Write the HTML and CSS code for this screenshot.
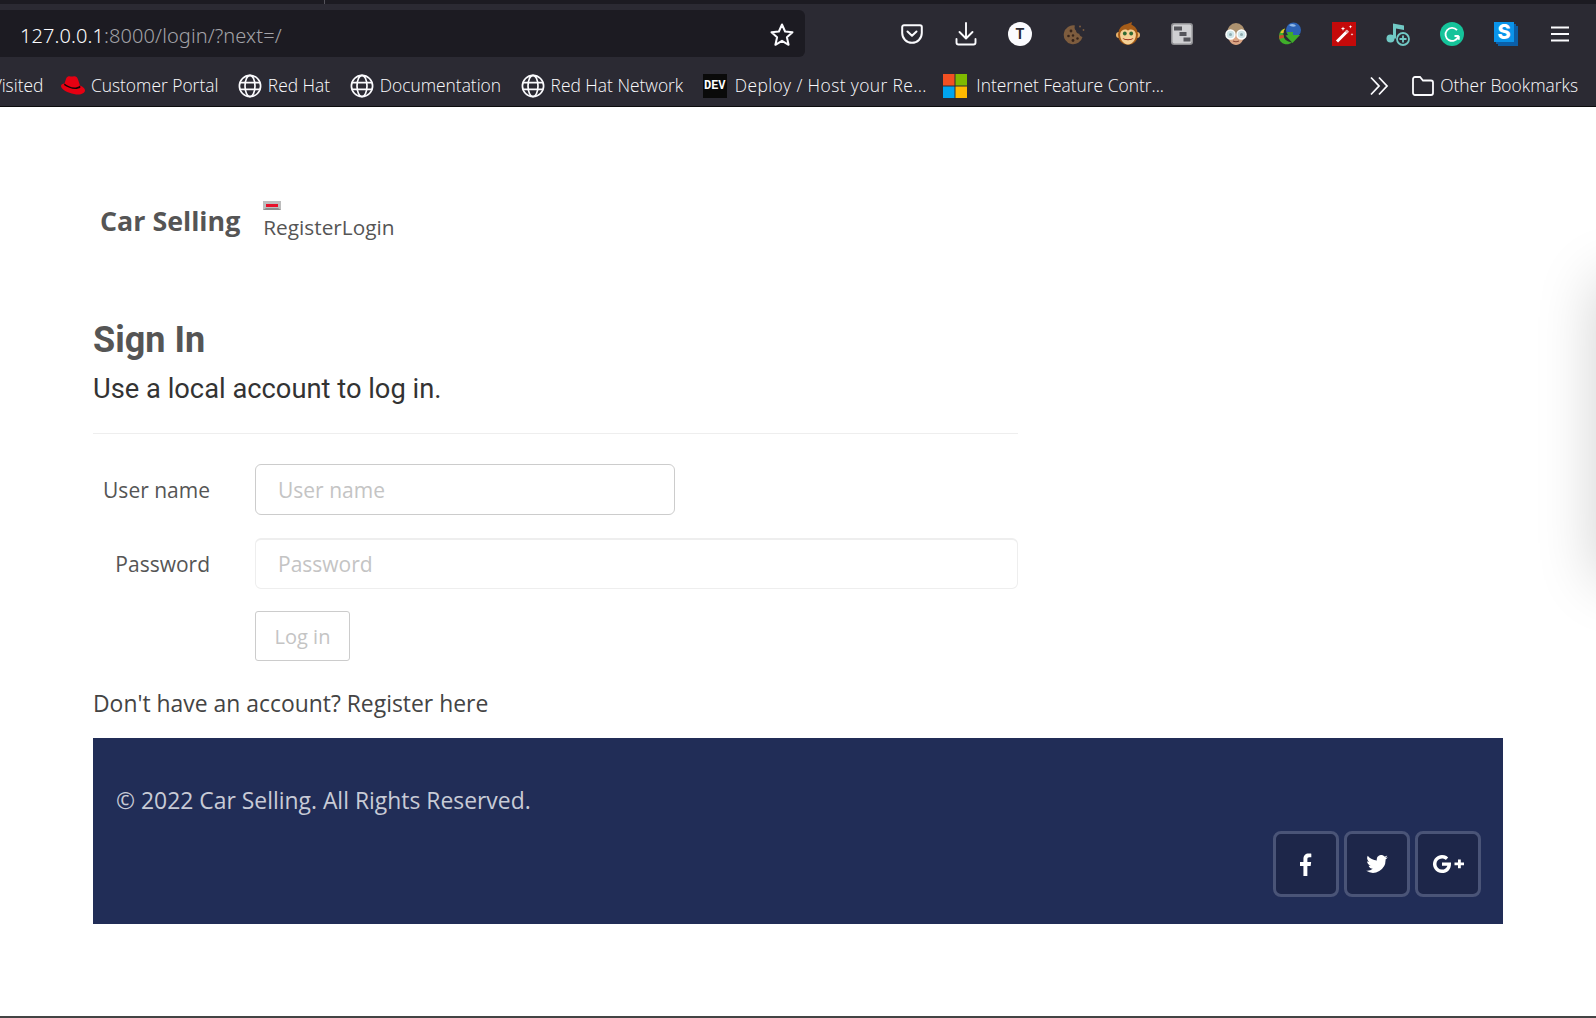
FILE: index.html
```html
<!DOCTYPE html>
<html>
	<head>
		<meta charset="utf-8">
		<title>Sign In</title>
		<link rel="stylesheet" href="styles.css">
	</head>
	<body>
		<svg class="defs" width="0" height="0">
			<symbol id="globe" viewBox="0 0 24 24">
				<g fill="none" stroke="#fbfbfe" stroke-width="1.7">
					<circle cx="12" cy="12" r="10.6"/>
					<ellipse cx="12" cy="12" rx="5" ry="10.6"/>
					<path d="M1.6 8.6h20.8M1.6 15.4h20.8"/>
				</g>
			</symbol>
		</svg>
		<div class="browser">
			<div class="tabstrip"><span class="tabsep"></span></div>
			<div class="toolbar">
				<div class="urlbar">
					<span class="url"><span class="host">127.0.0.1</span>:8000/login/?next=/</span>
					<svg class="star" width="26" height="26" viewBox="0 0 26 26"><path d="M13 2.500l3.100 7 7.400.7-5.600 5 1.700 7.600-6.600-4-6.600 4 1.700-7.600-5.600-5 7.400-.7z" fill="none" stroke="#fbfbfe" stroke-width="2" stroke-linejoin="round"/></svg>
				</div>
				<div class="addons">
					<span class="addon"><svg width="22" height="20" viewBox="0 0 22 20"><path d="M3 1.200h16a1.800 1.800 0 0 1 1.800 1.800v6a9.800 9.800 0 0 1-19.600 0V3A1.800 1.800 0 0 1 3 1.200z" fill="none" stroke="#fbfbfe" stroke-width="2"/><path d="M6.500 7.500l4.500 4.300 4.500-4.300" fill="none" stroke="#fbfbfe" stroke-width="2" stroke-linecap="round" stroke-linejoin="round"/></svg></span>
					<span class="addon"><svg width="22" height="24" viewBox="0 0 22 24"><path d="M11 1v15M4.500 10l6.500 6.500 6.500-6.500M1.500 17v3.500a2 2 0 0 0 2 2h15a2 2 0 0 0 2-2V17" fill="none" stroke="#fbfbfe" stroke-width="1.900" stroke-linecap="round" stroke-linejoin="round"/></svg></span>
					<span class="addon"><span class="badge-t">T</span></span>
					<span class="addon"><svg width="24" height="24" viewBox="0 0 24 24"><path d="M13 3.500a9.500 9.500 0 1 0 7.500 11.500c-2-.5-3-1.500-3.200-3.200-2-.2-3.300-1.500-3.300-3.300-1.500-1.200-1.800-3.200-1-5z" fill="#7d5c3e"/><circle cx="9" cy="9" r="1.400" fill="#36241a"/><circle cx="6.500" cy="14" r="1.300" fill="#36241a"/><circle cx="11" cy="13.500" r="1.200" fill="#36241a"/><circle cx="11" cy="18.500" r="1.400" fill="#36241a"/><circle cx="15.500" cy="16.500" r="1.200" fill="#36241a"/><circle cx="18" cy="4.500" r="1" fill="#7d5c3e"/><circle cx="21.500" cy="8" r=".9" fill="#7d5c3e"/></svg></span>
					<span class="addon"><svg width="24" height="24" viewBox="0 0 24 24"><path d="M10 2.500l6-2.500-1 4z" fill="#a85a17"/><circle cx="3" cy="13" r="3" fill="#e8b26c"/><circle cx="21" cy="13" r="3" fill="#e8b26c"/><ellipse cx="12" cy="12.500" rx="10" ry="10.500" fill="#a55c18"/><path d="M12 8.500c1.500-1.800 7-1.800 7.800 3 .8 5-3 11-7.800 11s-8.600-6-7.800-11c.8-4.800 6.300-4.800 7.800-3z" fill="#f6d196"/><circle cx="8.800" cy="11.500" r="1.900" fill="#2f6a33"/><circle cx="15.200" cy="11.500" r="1.900" fill="#2f6a33"/><path d="M6.500 16c3.500 1.600 7.500 1.600 11 0-1.500 3-9.500 3-11 0z" fill="#96281a"/></svg></span>
					<span class="addon"><svg width="22" height="22" viewBox="0 0 22 22"><rect width="22" height="22" rx="3" fill="#8f8f93"/><rect x="1.500" y="1.500" width="19" height="19" rx="2" fill="#cfcfd2"/><rect x="3" y="3.500" width="8" height="4" fill="#55555b"/><rect x="8.500" y="9" width="7" height="4" fill="#55555b"/><rect x="12.500" y="14.500" width="7" height="4" fill="#55555b"/></svg></span>
					<span class="addon"><svg width="24" height="24" viewBox="0 0 24 24"><ellipse cx="12" cy="11" rx="9" ry="10" fill="#ad9270"/><path d="M4 13c0 6 4 10 8 10s8-4 8-10z" fill="#dba584"/><circle cx="6.500" cy="12.500" r="4.500" fill="#cfe6ea" stroke="#fff" stroke-width="1.500"/><circle cx="17.500" cy="12.500" r="4.500" fill="#cfe6ea" stroke="#fff" stroke-width="1.500"/><circle cx="6.500" cy="12.500" r="1.500" fill="#8fabb0"/><circle cx="17.500" cy="12.500" r="1.500" fill="#8fabb0"/><path d="M9 19c2 1 4 1 6 0" stroke="#8a4a3a" stroke-width="1.200" fill="none"/></svg></span>
					<span class="addon"><svg width="24" height="24" viewBox="0 0 24 24"><circle cx="15.500" cy="8" r="7.500" fill="#2c62b4"/><path d="M11 3c3-2 6-1 7 1-2 1-5 1-7-1z" fill="#8fb8e8"/><path d="M1 15C1 10 3 7.500 7 6.500c-1.500 2-2 4-1.500 7 .5 3.500 3 6 8.500 7-5 4-13 1-13-5.500z" fill="#3fae2a"/><path d="M2.500 11C3 9 4.500 7.500 7 6.500 6 8 5.500 9.500 5.500 11z" fill="#e8c32a"/><path d="M1.200 13.500l4.300-.5.500 2.500-4.500 1.500z" fill="#d04a2a"/><path d="M9 10h6v3h7l-7.500 8L7.500 13.500l2.500-.5z" fill="#3fae2a"/></svg></span>
					<span class="addon"><svg width="24" height="24" viewBox="0 0 24 24"><rect width="24" height="24" fill="#c40a0a"/><path d="M5 19.500L15.500 9" stroke="#fff" stroke-width="3"/><path d="M14 10.500l2-2" stroke="#e8b0b0" stroke-width="3"/><path d="M11 4.500l.6 1.600 1.600.6-1.600.6-.6 1.600-.6-1.600-1.600-.6 1.600-.6zM18.500 3l.5 1.300 1.300.5-1.300.5-.5 1.300-.5-1.300-1.300-.5 1.300-.5zM20 11l.4 1 1 .4-1 .4-.4 1-.4-1-1-.4 1-.4z" fill="#fff"/></svg></span>
					<span class="addon"><svg width="24" height="24" viewBox="0 0 24 24"><g fill="#71c9c5"><circle cx="4.500" cy="16.500" r="4"/><path d="M7 16.500V1.500l11 2v4.500l-8-1.500v10z"/></g><circle cx="17" cy="17" r="6" fill="#2b2a33" stroke="#71c9c5" stroke-width="1.800"/><path d="M17 13.500v7M13.500 17h7" stroke="#71c9c5" stroke-width="1.800"/></svg></span>
					<span class="addon"><svg width="24" height="24" viewBox="0 0 24 24"><circle cx="12" cy="12" r="12" fill="#15c39a"/><path d="M17 8.200A6.500 6.500 0 1 0 18.200 14.500M18.800 14h-4.300M18.800 14v3.800" fill="none" stroke="#fff" stroke-width="1.800"/></svg></span>
					<span class="addon"><span class="badge-s">S</span></span>
					<span class="addon"><svg width="18" height="16" viewBox="0 0 18 16"><path d="M0 1.500h18M0 8h18M0 14.500h18" stroke="#fbfbfe" stroke-width="2"/></svg></span>
				</div>
			</div>
			<div class="bookmarks">
				<span class="bm bm-visited">Most Visited</span>
				<span class="bm">
					<svg width="24" height="22" viewBox="0 0 24 22"><path d="M7 1.500c2-1 3 .5 5 0s4-.5 5 3l2 6c3 1 5 3 5 5 0 3-5 5-11 3.500C7 18 0 14.500 0 11c0-1.500 1.500-2.500 3.500-2.500L5 4c.3-1.200 1-2 2-2.500z" fill="#e60012"/><path d="M3.500 8.500c4 3.500 11 6 15.500 2l.5 2c-4 3-12 1-16.500-2.500z" fill="#150505"/></svg>
					Customer Portal
				</span>
				<span class="bm"><svg width="24" height="24"><use href="#globe"/></svg>Red Hat</span>
				<span class="bm"><svg width="24" height="24"><use href="#globe"/></svg>Documentation</span>
				<span class="bm"><svg width="24" height="24"><use href="#globe"/></svg>Red Hat Network</span>
				<span class="bm bm-deploy"><span class="badge-dev">DEV</span>Deploy / Host your Re...</span>
				<span class="bm bm-ms">
					<svg width="24" height="24" viewBox="0 0 24 24"><rect width="11.500" height="11.500" fill="#f25022"/><rect x="12.500" width="11.500" height="11.500" fill="#7fba00"/><rect y="12.500" width="11.500" height="11.500" fill="#00a4ef"/><rect x="12.500" y="12.500" width="11.500" height="11.500" fill="#ffb900"/></svg>
					Internet Feature Contr...
				</span>
				<span class="bm-end">
					<svg width="20" height="20" viewBox="0 0 20 20"><path d="M2 1.500L10 10l-8 8.500M10 1.500L18 10l-8 8.500" fill="none" stroke="#fbfbfe" stroke-width="1.800"/></svg>
					<span class="bm"><svg width="22" height="22" viewBox="0 0 22 22"><path d="M3 2h5l3 3.500h8a2 2 0 0 1 2 2V18a2 2 0 0 1-2 2H3a2 2 0 0 1-2-2V4a2 2 0 0 1 2-2z" fill="none" stroke="#fbfbfe" stroke-width="1.800"/></svg>Other Bookmarks</span>
				</span>
			</div>
		</div>
		<div class="page">
			<div class="side-glow"></div>
			<div class="wrap">
				<div class="site-head">
					<a class="brand">Car Selling</a>
					<div class="site-nav">
						<svg class="flag" width="18" height="9" viewBox="0 0 18 9"><rect width="18" height="9" fill="#bdbdbd"/><path d="M0 9l3-2h12l3 2z" fill="#8c8c8c"/><rect x="3" y="3" width="12" height="3" fill="#e8102a"/></svg>
						<div class="nav-links"><a>Register</a><a>Login</a></div>
					</div>
				</div>
				<h2 class="title">Sign In</h2>
				<h4 class="subtitle">Use a local account to log in.</h4>
				<hr class="rule">
				<form class="login">
					<div class="row row-user">
						<label class="lbl">User name</label>
						<input class="field field-user" type="text" placeholder="User name">
					</div>
					<div class="row">
						<label class="lbl">Password</label>
						<input class="field field-pwd" type="password" placeholder="Password">
					</div>
					<div class="row">
						<span class="lbl"></span>
						<button class="btn" type="button">Log in</button>
					</div>
				</form>
				<p class="register">Don't have an account? Register here</p>
				<div class="footer">
					<p class="copy">© 2022 Car Selling. All Rights Reserved.</p>
					<div class="social">
						<a class="soc"><svg width="12" height="23" viewBox="0 0 14 24" preserveAspectRatio="none"><path d="M4 24V13.500H0v-4h4V6.500C4 2.500 6.500.5 10 .5c1.500 0 2.700.1 3.200.2v3.800h-2.300C9 4.500 8.600 5.400 8.600 6.800v2.700H13l-.6 4H8.600V24z" fill="#fff"/></svg></a>
						<a class="soc"><svg width="22" height="18" viewBox="0 0 24 20"><path d="M24 2.400c-.9.4-1.800.7-2.800.8 1-.6 1.800-1.600 2.200-2.700-1 .6-2 1-3.100 1.200A4.900 4.900 0 0 0 11.900 6.200C7.800 6 4.200 4 1.700.9.400 3.200 1 6.100 3.200 7.600c-.8 0-1.600-.2-2.200-.6 0 2.400 1.700 4.400 3.900 4.900-.7.2-1.500.2-2.200.1.600 2 2.400 3.400 4.600 3.400A9.900 9.900 0 0 1 0 17.500 14 14 0 0 0 21.500 5c1-.7 1.800-1.600 2.500-2.600z" fill="#fff"/></svg></a>
						<a class="soc"><svg width="32" height="20" viewBox="0 0 32 20"><path d="M19 8.500H10v3.200h5.400c-.5 2.400-2.800 3.900-5.400 3.900a5.600 5.600 0 0 1 0-11.200c1.500 0 2.800.5 3.800 1.500l2.400-2.400A9 9 0 1 0 10 19c5.400 0 9.400-3.600 9-10.500z" fill="#fff"/><path d="M26 5.500v3h-3.500v2.800H26v3h2.800v-3h3.200V8.500h-3.200v-3z" fill="#fff"/></svg></a>
					</div>
				</div>
			</div>
		</div>
	</body>
</html>
```

FILE: styles.css
```css
html, body {
	margin: 0;
	height: 100%;
}
body {
	display: flex;
	flex-direction: column;
	overflow: hidden;
	font-family: "Open Sans", "Liberation Sans", sans-serif;
	background: #fff;
}
.defs {
	position: absolute;
}

/* browser chrome */
.browser {
	background: #2b2a33;
	color: #fbfbfe;
	flex: none;
}
.tabstrip {
	height: 4px;
	background: #1c1b22;
}
.tabsep {
	display: block;
	width: 1px;
	height: 4px;
	margin-left: 324px;
	background: #55545c;
}
.toolbar {
	height: 54px;
	padding-top: 6px;
	box-sizing: border-box;
	display: flex;
}
.urlbar {
	width: 805px;
	height: 47px;
	background: #1c1b22;
	border-radius: 0 6px 6px 0;
	display: flex;
	align-items: center;
	justify-content: space-between;
	padding: 3px 10px 0 20px;
	box-sizing: border-box;
}
.url {
	font-family: "Noto Sans", sans-serif;
	font-size: 20px;
	font-weight: 300;
	letter-spacing: .1px;
	color: #a3a3a8;
}
.host {
	color: #fbfbfe;
}
.addons {
	display: flex;
	margin-left: 80px;
}
.addon {
	width: 54px;
	height: 47px;
	display: flex;
	align-items: center;
	justify-content: center;
}
.badge-t {
	width: 24px;
	height: 24px;
	border-radius: 50%;
	background: #fbfbfe;
	color: #2b2a33;
	font: bold 14px/24px "Inter", sans-serif;
	text-align: center;
}
.badge-s {
	width: 20px;
	height: 20px;
	margin: -4px 4px 0 0;
	background: #0a94ea;
	box-shadow: 2px 2px 0 #0b5fa8, 4px 4px 0 #0b5fa8;
	color: #fff;
	font: 800 20px/20px "Inter", sans-serif;
	text-align: center;
}
.bookmarks {
	height: 49px;
	padding-top: 5px;
	box-sizing: border-box;
	border-bottom: 1px solid #0c0c0d;
	display: flex;
	align-items: center;
	gap: 19.5px;
	font-size: 17.4px;
}
.bm {
	display: flex;
	align-items: center;
	gap: 6px;
	white-space: nowrap;
	font-weight: 300;
}
.bm > svg {
	margin-top: 2px;
}
.bm-visited {
	margin-left: -52px;
	margin-right: -2px;
}
.bm-deploy {
	letter-spacing: .4px;
}
.bm-ms {
	margin-left: -3px;
	gap: 9px;
}
.badge-dev {
	width: 24px;
	height: 24px;
	margin: 2px 2px 0 0;
	background: #0a0a0a;
	color: #fff;
	font: bold 12px/24px "Liberation Mono", monospace;
	letter-spacing: 0;
	text-align: center;
}
.bm-end {
	margin-left: auto;
	display: flex;
	align-items: center;
	gap: 23px;
	padding-right: 18px;
}
.bm-end > svg {
	margin-top: 2px;
}

/* page */
.page {
	flex: 1;
	position: relative;
	border-bottom: 2px solid #444;
	overflow: hidden;
}
.side-glow {
	position: absolute;
	top: 183px;
	right: -70px;
	width: 60px;
	height: 280px;
	background: #ddd;
	box-shadow: 0 0 60px 10px rgba(0, 0, 0, .18);
}
.wrap {
	width: 1410px;
	margin-left: 93px;
}
.site-head {
	display: flex;
	padding: 94px 0 0 7px;
	height: 116px;
	color: #555;
}
.brand {
	font-size: 26.8px;
	font-weight: 700;
	line-height: 40px;
}
.site-nav {
	margin-left: 23px;
}
.flag {
	display: block;
}
.nav-links {
	margin-top: 2px;
	font-size: 20.8px;
	line-height: 30px;
	color: #555;
}
.title {
	margin: 0;
	font: 700 36px/46px "Roboto", sans-serif;
	color: #555;
}
.subtitle {
	margin: 6px 0 0;
	font: 400 27.3px/40px "Roboto", sans-serif;
	color: #333;
}
.rule {
	width: 925px;
	margin: 24px 0 30px;
	border: 0;
	border-top: 1px solid #eee;
}
.login {
	display: flex;
	flex-direction: column;
	gap: 22px;
}
.row {
	display: flex;
	align-items: center;
}
.row-user {
	margin-bottom: 1px;
}
.lbl {
	width: 117px;
	padding-right: 45px;
	text-align: right;
	font-size: 21px;
	color: #555;
}
.field {
	height: 51px;
	box-sizing: border-box;
	padding: 0 22px;
	border-radius: 6px;
	font: 21px "Open Sans", sans-serif;
	outline: none;
	background: #fff;
}
.field::placeholder {
	color: #c4c4c4;
	opacity: 1;
}
.field-user {
	width: 420px;
	border: 1px solid #ccc;
}
.field-pwd {
	width: 763px;
	border: 1px solid #eee;
	border-top-width: 2px;
}
.btn {
	width: 95px;
	height: 50px;
	padding: 0;
	background: #fff;
	border: 1px solid #ccc;
	border-radius: 3px;
	color: #c4c4c4;
	font: 20px "Open Sans", sans-serif;
}
.register {
	margin: 24px 0 0;
	font-size: 22.9px;
	line-height: 38px;
	color: #444;
}
.footer {
	height: 186px;
	margin-top: 15px;
	padding: 44px 22px 0 23px;
	box-sizing: border-box;
	background: #212d57;
}
.copy {
	margin: 0;
	font-size: 22.9px;
	line-height: 38px;
	color: #c8cbd6;
}
.social {
	display: flex;
	justify-content: flex-end;
	gap: 5px;
	margin-top: 11px;
}
.soc {
	width: 66px;
	height: 66px;
	box-sizing: border-box;
	display: flex;
	align-items: center;
	justify-content: center;
	border: 3px solid #4a5477;
	border-radius: 8px;
	background: #1d2649;
}
```
